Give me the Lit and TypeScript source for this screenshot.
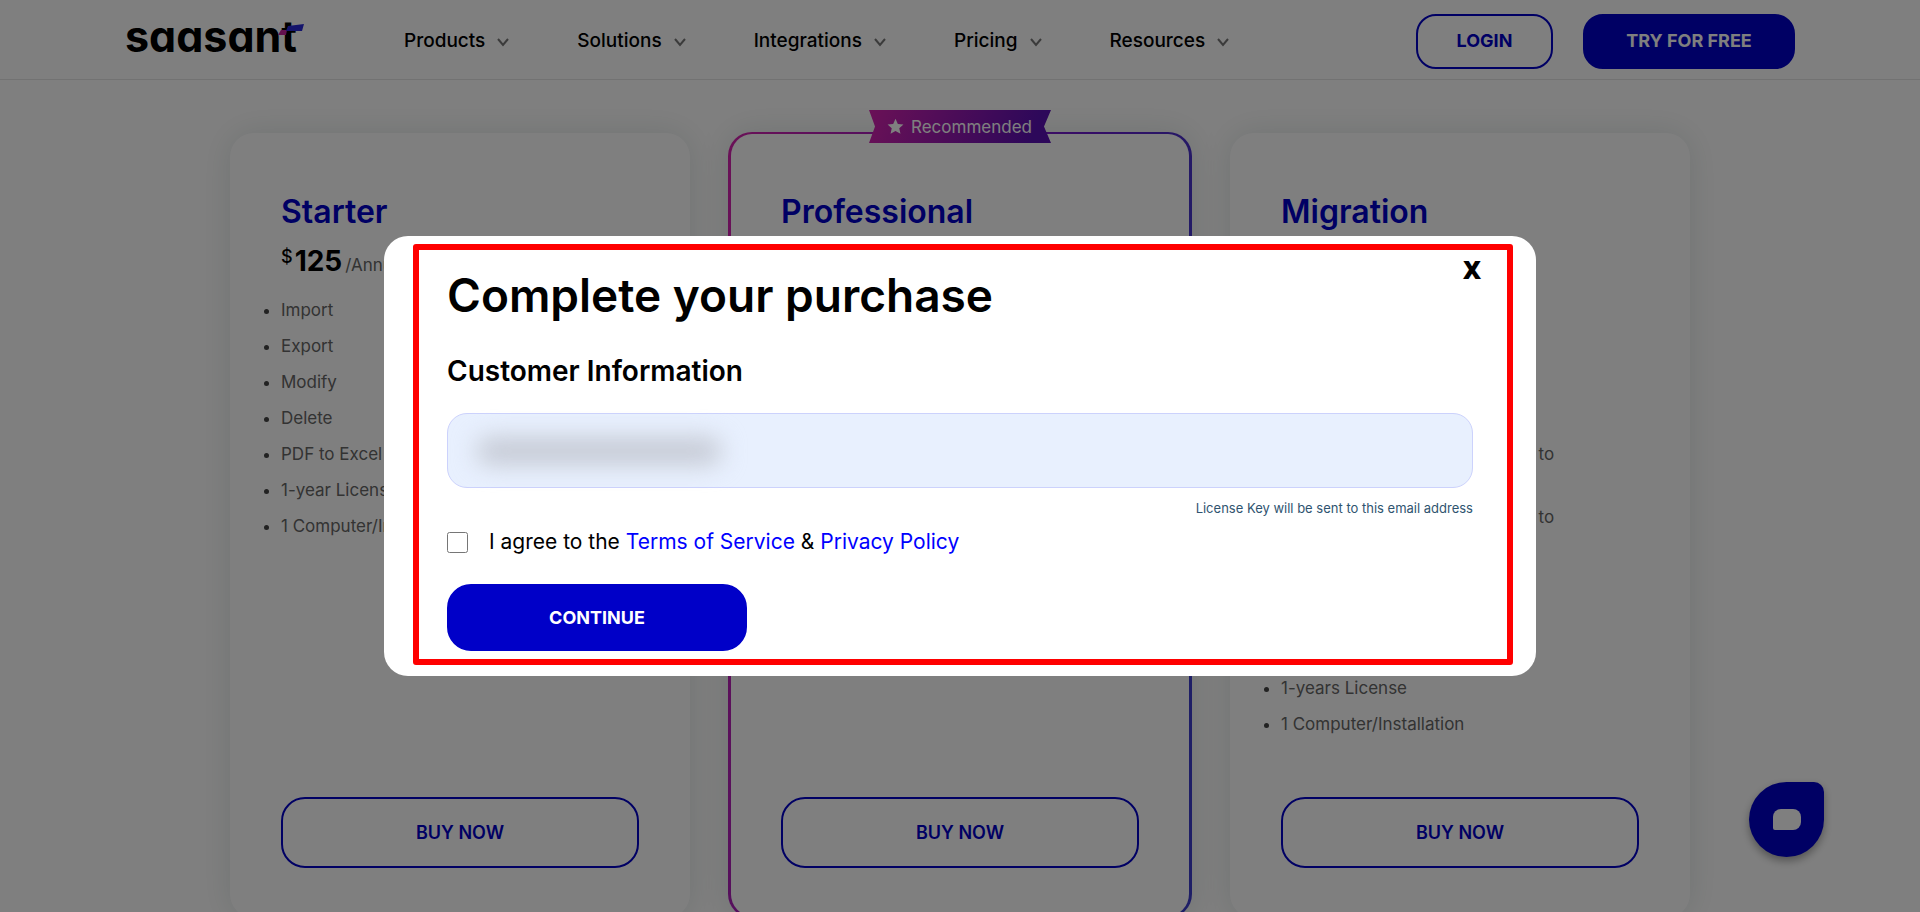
import { LitElement, html, css, svg } from "lit";
import { customElement, property, state } from "lit/decorators.js";

interface Plan {
  name: string;
  price: string;
  features: string[];
  recommended?: boolean;
}

const PLANS: Plan[] = [
  {
    name: "Starter",
    price: "125",
    features: ["Import", "Export", "Modify", "Delete", "PDF to Excel", "1-year License", "1 Computer/Installation"],
  },
  {
    name: "Professional",
    price: "225",
    recommended: true,
    features: ["Import", "Export", "Modify", "Delete", "PDF to Excel", "1-year License", "1 Computer/Installation"],
  },
  {
    name: "Migration",
    price: "450",
    features: [
      "Import",
      "Export",
      "Modify",
      "Delete",
      "Migration: QuickBooks Desktop to QuickBooks Online",
      "Migration: QuickBooks Desktop to QuickBooks Desktop",
      "Copy Company Lists",
      "Copy Transactions",
      "PDF to Excel",
      "1-years License",
      "1 Computer/Installation",
    ],
  },
];

const MENU = ["Products", "Solutions", "Integrations", "Pricing", "Resources"];

const chevron = svg`<svg width="12" height="9" viewBox="0 0 12 9" fill="none" stroke="#777" stroke-width="2" aria-hidden="true"><path d="M1 1l5 6 5-6"/></svg>`;

@customElement("plan-card")
class PlanCard extends LitElement {
  @property({ attribute: false }) plan!: Plan;

  static styles = css`
    :host {
      display: grid;
    }
    .card {
      position: relative;
      box-sizing: border-box;
      display: flex;
      flex-direction: column;
      padding: 56px 51px 50px;
      border-radius: 24px;
      background: #fff;
      box-shadow: 0 0 32px rgba(20, 60, 50, 0.12);
    }
    .featured {
      margin: -1px -2px 0;
      padding: 55px 50px 48px;
      border: 2px solid transparent;
      border-width: 2px 3px;
      background:
        linear-gradient(#fff, #fff) padding-box,
        linear-gradient(100deg, #d522ae, #6a1acc 60%, #3c3ccc 85%) border-box;
    }
    .ribbon {
      position: absolute;
      top: -24px;
      left: 50%;
      transform: translateX(-50%);
      display: flex;
      align-items: center;
      gap: 7px;
      box-sizing: border-box;
      height: 33px;
      padding: 0 19px 0 18px;
      font-size: 17px;
      color: #fff;
      white-space: nowrap;
      background: linear-gradient(110deg, #d522ae, #5a10b4 90%);
      clip-path: polygon(0 0, 100% 0, calc(100% - 7px) 50%, 100% 100%, 0 100%, 6px 50%);
    }
    h2 {
      margin: 0;
      font-size: 32px;
      line-height: 46px;
      font-weight: 600;
      color: #0000c8;
    }
    .price {
      display: flex;
      align-items: baseline;
      margin: 6px 0 12px;
      line-height: 40px;
      color: #000;
    }
    .currency {
      align-self: flex-start;
      font-size: 18px;
      line-height: 32px;
      font-weight: 500;
      margin-right: 2px;
    }
    .amount {
      font-size: 28px;
      font-weight: 700;
    }
    .term {
      font-size: 17px;
      margin-left: 3px;
      color: #666;
    }
    ul {
      margin: 0;
      padding: 0;
      font-size: 17px;
      line-height: 27px;
      color: #666;
    }
    li {
      margin-bottom: 9px;
    }
    li::marker {
      color: #444;
    }
    button {
      margin-top: auto;
      height: 71px;
      border: 2px solid #0000c8;
      border-radius: 24px;
      background: none;
      font: 600 18px/24px Inter, sans-serif;
      color: #0000c8;
      cursor: pointer;
    }
  `;

  render() {
    const { name, price, features, recommended } = this.plan;
    return html`
      <article class="card ${recommended ? "featured" : ""}">
        ${recommended
          ? html`<div class="ribbon">
              <svg width="17" height="17" viewBox="0 0 24 24" fill="#fff" aria-hidden="true">
                <path d="M12 1l3.300 7.300 7.900.8-5.900 5.300 1.700 7.800L12 18.200 5 22.200l1.700-7.800L.8 9.100l7.900-.8z" />
              </svg>
              <span>Recommended</span>
            </div>`
          : ""}
        <h2>${name}</h2>
        <div class="price">
          <span class="currency">$</span><span class="amount">${price}</span><span class="term">/Annum</span>
        </div>
        <ul>
          ${features.map((f) => html`<li>${f}</li>`)}
        </ul>
        <button type="button">BUY NOW</button>
      </article>
    `;
  }
}

@customElement("app-root")
class AppRoot extends LitElement {
  @state() private agreed = false;

  static styles = css`
    :host {
      display: block;
      height: 100vh;
      overflow: hidden;
      background: #fff;
      font-family: Inter, "Liberation Sans", sans-serif;
      color: #000;
    }
    header {
      display: flex;
      align-items: center;
      box-sizing: border-box;
      height: 80px;
      padding: 0 125px;
      border-bottom: 1px solid #e4e4e4;
    }
    .logo {
      display: flex;
      width: 180px;
      height: 48px;
      overflow: visible;
    }
    .logo text {
      font: 700 43px Inter, sans-serif;
      font-feature-settings: "cv11";
    }
    nav {
      display: flex;
      gap: 68px;
      margin: 2px auto 0 99px;
    }
    nav a {
      display: flex;
      align-items: center;
      gap: 12px;
      font-size: 19px;
      line-height: 24px;
      font-weight: 500;
      color: #000;
      text-decoration: none;
    }
    nav svg {
      margin-top: 4px;
    }
    .actions {
      display: flex;
      gap: 30px;
      margin-top: 3px;
    }
    .actions button,
    .continue {
      height: 55px;
      border: 2px solid #0000c8;
      border-radius: 20px;
      background: none;
      font: 700 18px/24px Inter, sans-serif;
      color: #0000c8;
      cursor: pointer;
    }
    .login {
      width: 137px;
    }
    .actions .try {
      width: 212px;
      background: #0000c8;
      color: #fff;
    }
    main {
      display: grid;
      grid-template-columns: repeat(3, 1fr);
      gap: 40px;
      max-width: 1460px;
      margin: 53px auto 0;
      min-height: 785px;
    }
    .chat {
      position: fixed;
      right: 96px;
      bottom: 55px;
      display: grid;
      place-items: center;
      width: 75px;
      height: 75px;
      border: 0;
      border-radius: 50% 10px 50% 50%;
      background: #0000c8;
      box-shadow: 0 4px 8px rgba(0, 0, 0, 0.35);
    }
    .bubble {
      width: 28px;
      height: 21px;
      border-radius: 8px 8px 8px 2px;
      background: #fff;
    }
    .overlay {
      position: fixed;
      inset: 0;
      display: flex;
      align-items: center;
      justify-content: center;
      background: rgba(0, 0, 0, 0.5);
    }
    .modal {
      position: relative;
      box-sizing: border-box;
      width: 60%;
      padding: 29px 63px 25px;
      border-radius: 24px;
      background: #fff;
    }
    .highlight {
      position: absolute;
      inset: 8px 23px 11px 29px;
      border: 6px solid #f00;
      border-radius: 3px;
      pointer-events: none;
    }
    .close {
      position: absolute;
      top: 17px;
      right: 51px;
      padding: 0 4px;
      border: 0;
      background: none;
      font: 800 25px/32px "Open Sans", sans-serif;
      color: #000;
      cursor: pointer;
    }
    h1 {
      margin: 0;
      font-size: 46px;
      line-height: 60px;
      font-weight: 600;
    }
    .modal h2 {
      margin: 28px 0 23px;
      font-size: 28px;
      line-height: 37px;
      font-weight: 600;
    }
    .field {
      display: grid;
    }
    .field > * {
      grid-area: 1 / 1;
    }
    .field input {
      box-sizing: border-box;
      width: 100%;
      height: 75px;
      padding: 0 24px;
      border: 1px solid #ccd2fc;
      border-radius: 20px;
      background: #e8f0fe;
      font: 400 20px Inter, sans-serif;
      outline: none;
    }
    .redacted {
      align-self: center;
      width: 244px;
      height: 26px;
      margin-left: 30px;
      border-radius: 12px;
      background: #c3c7d1;
      filter: blur(12px);
      pointer-events: none;
    }
    .hint {
      display: block;
      margin: 10px 0 8px;
      font-size: 13px;
      line-height: 20px;
      text-align: right;
      color: #2f5470;
    }
    .agree {
      display: flex;
      align-items: center;
      gap: 21px;
      margin-bottom: 26px;
      font-size: 21px;
      line-height: 32px;
    }
    .agree input {
      width: 21px;
      height: 21px;
      margin: 0;
    }
    .agree a {
      color: #00f;
      text-decoration: none;
    }
    .continue {
      display: block;
      width: 300px;
      height: 67px;
      border-radius: 24px;
      background: #0000c8;
      color: #fff;
    }
  `;

  render() {
    return html`
      <header>
        <svg class="logo" viewBox="0 0 180 48" role="img" aria-label="saasant">
          <text x="0" y="36">saasant</text>
          <path d="M153 19l3-5h6l-1 5z" fill="#c8209c" />
          <path d="M163 10l16-2-2 7h-16z" fill="#2828d8" />
        </svg>
        <nav>${MENU.map((m) => html`<a href="#">${m}${chevron}</a>`)}</nav>
        <div class="actions">
          <button type="button" class="login">LOGIN</button>
          <button type="button" class="try">TRY FOR FREE</button>
        </div>
      </header>
      <main>${PLANS.map((p) => html`<plan-card .plan=${p}></plan-card>`)}</main>
      <button class="chat" type="button" aria-label="Chat"><span class="bubble"></span></button>

      <div class="overlay">
        <section class="modal" role="dialog" aria-modal="true" aria-labelledby="title">
          <h1 id="title">Complete your purchase</h1>
          <h2>Customer Information</h2>
          <div class="field">
            <input id="email" type="email" aria-label="Email address" aria-describedby="hint" />
            <span class="redacted"></span>
          </div>
          <small class="hint" id="hint">License Key will be sent to this email address</small>
          <div class="agree">
            <input
              id="agree"
              type="checkbox"
              .checked=${this.agreed}
              @change=${(e: Event) => (this.agreed = (e.target as HTMLInputElement).checked)}
            />
            <label for="agree">I agree to the <a href="#">Terms of Service</a> &amp; <a href="#">Privacy Policy</a></label>
          </div>
          <button class="continue" type="button">CONTINUE</button>
          <button class="close" type="button" aria-label="Close">X</button>
          <div class="highlight"></div>
        </section>
      </div>
    `;
  }
}
